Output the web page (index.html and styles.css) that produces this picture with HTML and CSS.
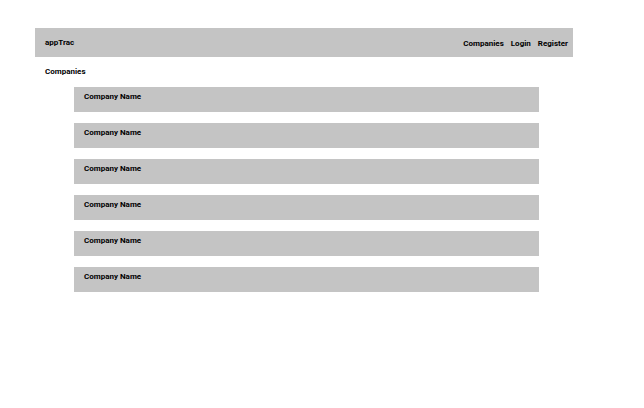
FILE: index.html
```html
<!DOCTYPE html>
<html>
<head>
<meta charset="utf-8">
<link rel="stylesheet" href="styles.css">
</head>
<body>
<div class="page">
  <header class="topbar">
    <div class="brand">appTrac</div>
    <nav class="nav">
      <span>Companies</span>
      <span>Login</span>
      <span>Register</span>
    </nav>
  </header>
  <h1 class="title">Companies</h1>
  <ul class="list">
    <li class="card">Company Name</li>
    <li class="card">Company Name</li>
    <li class="card">Company Name</li>
    <li class="card">Company Name</li>
    <li class="card">Company Name</li>
    <li class="card">Company Name</li>
  </ul>
</div>
</body>
</html>
```
FILE: styles.css
```css
html, body {
  margin: 0;
  padding: 0;
  background: #ffffff;
}
body {
  font-family: Roboto, "Liberation Sans", sans-serif;
  font-size: 8px;
  font-weight: 700;
  color: #000;
}
.page {
  width: 538px;
  margin: 0 0 0 35px;
  padding-top: 28px;
}
.topbar {
  height: 29px;
  background: #c4c4c4;
  display: flex;
  align-items: center;
  justify-content: space-between;
  padding: 0 5px 0 10px;
}
.brand {
  line-height: 10px;
}
.nav {
  display: flex;
  gap: 7px;
  padding-top: 2px;
}
.title {
  font-size: 8px;
  font-weight: 700;
  margin: 10px 0 0 10px;
  line-height: 10px;
}
.list {
  list-style: none;
  margin: 10px 0 0 39px;
  padding: 0;
  width: 465px;
  display: flex;
  flex-direction: column;
  gap: 11px;
}
.card {
  height: 25px;
  box-sizing: border-box;
  background: #c4c4c4;
  padding: 5px 0 0 10px;
  line-height: 10px;
}
```
